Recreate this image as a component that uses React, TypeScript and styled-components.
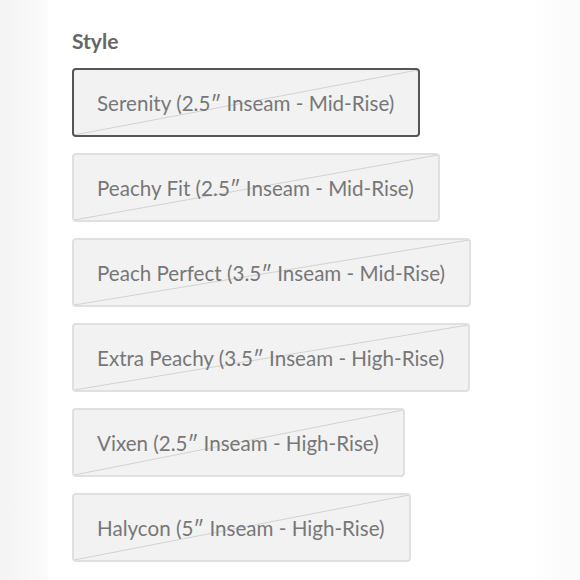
import styled, { createGlobalStyle } from "styled-components";

const GlobalStyle = createGlobalStyle`
  html, body {
    margin: 0;
    padding: 0;
    background: #fff;
  }
  body {
    font-family: "Lato", "Liberation Sans", sans-serif;
  }
`

const styles = [
    {name: "Serenity (2.5″ Inseam - Mid-Rise)", selected: true},
    {name: "Peachy Fit (2.5″ Inseam - Mid-Rise)"},
    {name: "Peach Perfect (3.5″ Inseam - Mid-Rise)"},
    {name: "Extra Peachy (3.5″ Inseam - High-Rise)"},
    {name: "Vixen (2.5″ Inseam - High-Rise)"},
    {name: "Halycon (5″ Inseam - High-Rise)"},
]

export default function App() {
    return (
        <>
            <GlobalStyle/>
            <Page>
                <Gutter/>
                <Content>
                    <Title>Style</Title>
                    <OptionList>
                        {styles.map(s => (
                            <Option key={s.name} $selected={!!s.selected}>{s.name}</Option>
                        ))}
                    </OptionList>
                </Content>
                <RightGutter/>
            </Page>
        </>
    )
}

const Page = styled.div`
  display: flex;
  width: 580px;
  height: 580px;
  overflow: hidden;
  background: #fff;
`

const Gutter = styled.div`
  width: 48px;
  flex-shrink: 0;
  background: linear-gradient(to right, #f4f4f4, #f9f9f9 80%, #fbfbfb);
`

const RightGutter = styled.div`
  width: 50px;
  flex-shrink: 0;
  background: linear-gradient(to right, #fff, #fafafa);
`

const Content = styled.div`
  flex: 1;
  padding: 28px 0 0 24px;
`

const Title = styled.h3`
  margin: 0 0 14px;
  font-size: 21px;
  font-weight: 700;
  color: #666;
  line-height: 26px;
`

const OptionList = styled.div`
  display: flex;
  flex-direction: column;
  align-items: flex-start;
  gap: 16px;
`

const Option = styled.button<{ $selected: boolean }>`
  height: 69px;
  padding: 0 24px 0 23px;
  font-family: inherit;
  font-size: 20.6px;
  color: #777;
  border-radius: 4px;
  border: 2px solid ${p => p.$selected ? "#555" : "#e0e0e0"};
  background-color: #f2f2f2;
  background-image: linear-gradient(to bottom right, transparent calc(50% - 1px), #d2d2d2 50%, transparent calc(50% + 1px));
  white-space: nowrap;
  cursor: pointer;
`
